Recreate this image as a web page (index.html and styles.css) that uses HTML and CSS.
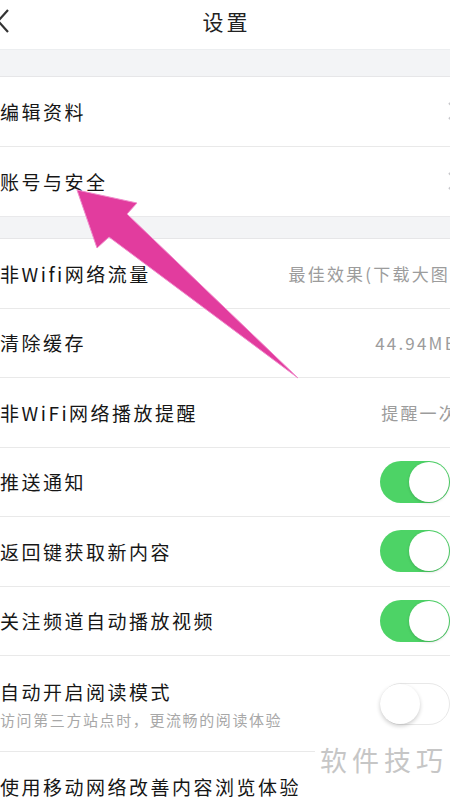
FILE: index.html
```html
<!DOCTYPE html>
<html>
<head>
<meta name="viewport" content="width=device-width, initial-scale=1">
<link rel="stylesheet" href="styles.css">
</head>
<body>

<div class="topbar">
  <svg class="back" width="12" height="24" viewBox="0 0 12 24">
    <polyline points="8,1 -2,12 8,23" fill="none" stroke="#333" stroke-width="2.2"/>
  </svg>
  <h1 class="title">设置</h1>
  <span></span>
</div>

<div class="page">
  <div class="band first"></div>

  <div class="row">
    <span class="label">编辑资料</span>
    <svg class="chev" width="10" height="18" viewBox="0 0 10 18"><polyline points="1,1 9,9 1,17" fill="none" stroke="#c8c8cc" stroke-width="2"/></svg>
  </div>
  <div class="row last">
    <span class="label">账号与安全</span>
    <svg class="chev" width="10" height="18" viewBox="0 0 10 18"><polyline points="1,1 9,9 1,17" fill="none" stroke="#c8c8cc" stroke-width="2"/></svg>
  </div>

  <div class="band"></div>

  <div class="row">
    <span class="label">非Wifi网络流量</span>
    <span class="value">最佳效果(下载大图)</span>
  </div>
  <div class="row">
    <span class="label">清除缓存</span>
    <span class="value">44.94MB</span>
  </div>
  <div class="row">
    <span class="label">非WiFi网络播放提醒</span>
    <span class="value">提醒一次</span>
  </div>
  <div class="row">
    <span class="label">推送通知</span>
    <span class="toggle on"><span class="knob"></span></span>
  </div>
  <div class="row">
    <span class="label">返回键获取新内容</span>
    <span class="toggle on"><span class="knob"></span></span>
  </div>
  <div class="row">
    <span class="label">关注频道自动播放视频</span>
    <span class="toggle on"><span class="knob"></span></span>
  </div>
  <div class="row tall">
    <div class="text">
      <span class="label">自动开启阅读模式</span>
      <span class="sub">访问第三方站点时，更流畅的阅读体验</span>
    </div>
    <span class="toggle off"><span class="knob"></span></span>
  </div>
  <div class="row">
    <span class="label">使用移动网络改善内容浏览体验</span>
  </div>
</div>

<!-- annotation arrow drawn over the screenshot -->
<svg class="arrow" width="450" height="801" viewBox="0 0 450 801">
  <polygon points="77,190 137,203 127,214 298,378 109,237 97,248" fill="#e23c9e" stroke="#f08ccb" stroke-width="1"/>
</svg>

<div class="mark">软件技巧</div>

</body>
</html>
```

FILE: styles.css
```css
body {
    margin: 0;
    overflow: hidden;
    background: #fff;
    font-family: "Noto Sans CJK SC", "Liberation Sans", sans-serif;
    color: #161616;
}

.topbar {
    width: 450px;
    height: 50px;
    display: grid;
    grid-template-columns: 1fr auto 1fr;
    align-items: center;
    border-bottom: 1px solid #eceef0;
    padding-bottom: 7px;
    box-sizing: border-box;
}

.back {
    display: block;
}

.title {
    margin: 0;
    font-size: 21px;
    font-weight: normal;
    letter-spacing: 3px;
    margin-right: -3px;
    color: #222;
}

.page {
    width: 466px;
}

.band {
    height: 21px;
    background: #f3f4f6;
    border-top: 1px solid #e9e9eb;
    border-bottom: 1px solid #e6e6e8;
}

.band.first {
    height: 26px;
    border-top: none;
}

.row {
    height: 69.5px;
    box-sizing: border-box;
    display: flex;
    align-items: center;
    justify-content: space-between;
    padding-right: 8px;
    border-bottom: 1px solid #e9e9e9;
}

.row.last {
    border-bottom: none;
}

.row.tall {
    height: 96px;
}

.label {
    font-size: 19px;
    letter-spacing: 2.5px;
    white-space: nowrap;
}

.text {
    display: flex;
    flex-direction: column;
    gap: 4px;
}

.sub {
    font-size: 15px;
    letter-spacing: 1.6px;
    color: #a8a8a8;
    white-space: nowrap;
}

.value {
    font-size: 17px;
    letter-spacing: 2.2px;
    color: #9c9c9c;
    white-space: nowrap;
}

.chev {
    display: block;
}

.toggle {
    width: 70px;
    height: 42px;
    border-radius: 21px;
    box-sizing: border-box;
    display: flex;
    align-items: center;
    padding: 1px;
    margin-right: 8px;
}

.toggle.on {
    background: #4dd366;
    justify-content: flex-end;
}

.toggle.off {
    background: #fff;
    border: 1.5px solid #e8e8e8;
    justify-content: flex-start;
    padding: 0;
}

.knob {
    width: 40px;
    height: 40px;
    border-radius: 50%;
    background: #fff;
    box-shadow: 0 1px 3px rgba(0, 0, 0, 0.18);
}

.toggle.off .knob {
    margin-left: -1px;
    box-shadow: 0 2px 4px rgba(0, 0, 0, 0.2);
}

.arrow {
    position: absolute;
    left: 0;
    top: 0;
    pointer-events: none;
}

.mark {
    position: absolute;
    left: 315px;
    top: 740px;
    width: 135px;
    height: 42px;
    background: #fff;
    font-size: 27px;
    line-height: 40px;
    letter-spacing: 5px;
    color: #c6c6c6;
    padding-left: 5px;
    box-sizing: border-box;
    white-space: nowrap;
    overflow: hidden;
}
```
